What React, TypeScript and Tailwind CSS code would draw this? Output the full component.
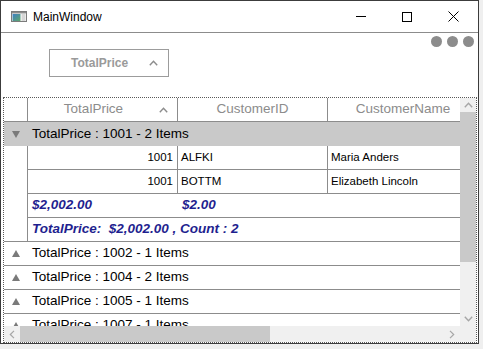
import React from 'react';

const Chevron = ({ up = true, className = '' }: { up?: boolean; className?: string }) => (
  <svg width="9" height="6" viewBox="0 0 9 6" className={className}>
    <path
      d={up ? 'M0.8 5.2 L4.5 1.3 L8.2 5.2' : 'M0.8 0.8 L4.5 4.7 L8.2 0.8'}
      fill="none"
      stroke="currentColor"
      strokeWidth="1.4"
    />
  </svg>
);

const SideChevron = ({ left = true }: { left?: boolean }) => (
  <svg width="6" height="9" viewBox="0 0 6 9" className="text-[#a6a6a6]">
    <path d={left ? 'M5 0.8 L1.3 4.5 L5 8.2' : 'M1 0.8 L4.7 4.5 L1 8.2'} fill="none" stroke="currentColor" strokeWidth="1.2" />
  </svg>
);

const Tri = ({ down = false }: { down?: boolean }) => (
  <svg width="8" height="7" viewBox="0 0 8 7">
    <polygon points={down ? '0,0 8,0 4,7' : '4,0 8,7 0,7'} fill="#7a7a7a" />
  </svg>
);

const AppIcon = () => (
  <svg width="16" height="11" viewBox="0 0 16 11">
    <defs>
      <linearGradient id="ic" x1="0" y1="0" x2="1" y2="1">
        <stop offset="0" stopColor="#3d7fc4" />
        <stop offset="1" stopColor="#5fa86a" />
      </linearGradient>
    </defs>
    <rect x="0.5" y="0.5" width="15" height="10" fill="#fff" stroke="#7b7b7b" />
    <rect x="1" y="1" width="14" height="1.5" fill="#8c8c8c" />
    <rect x="1.5" y="3" width="8" height="7" fill="url(#ic)" />
    <rect x="10.5" y="3" width="4" height="7" fill="#d6d6d6" />
  </svg>
);

const collapsed = ['1002 - 1', '1004 - 2', '1005 - 1', '1007 - 1'];

const data = [
  { price: '1001', id: 'ALFKI', name: 'Maria Anders' },
  { price: '1001', id: 'BOTTM', name: 'Elizabeth Lincoln' },
];

export default function App() {
  return (
    <div className="w-[483px] h-[349px] bg-[#efefef] font-['Liberation_Sans',Arial,sans-serif] text-black overflow-hidden">
      <div className="w-[479px] h-[344px] border border-[#3c3c3c] bg-white flex flex-col">
        {/* title bar */}
        <div className="h-[32px] shrink-0 border-b border-[#8c8c8c] flex items-center">
          <div className="ml-[10px] flex items-center">
            <AppIcon />
          </div>
          <span className="ml-[6px] text-[12px]">MainWindow</span>
          <div className="ml-auto flex items-center h-full">
            <div className="w-[46px] flex justify-center">
              <div className="w-[10px] h-px bg-black" />
            </div>
            <div className="w-[46px] flex justify-center">
              <div className="w-[10px] h-[10px] border border-black" />
            </div>
            <div className="w-[46px] flex justify-center mr-[2px]">
              <svg width="11" height="11" viewBox="0 0 11 11">
                <path d="M0.5 0.5 L10.5 10.5 M10.5 0.5 L0.5 10.5" stroke="#000" strokeWidth="1" />
              </svg>
            </div>
          </div>
        </div>

        {/* group drop area */}
        <div className="h-[64px] shrink-0 relative">
          <div className="ml-[48px] mt-[16px] w-[120px] h-[28px] border border-[#9c9c9c] flex items-center">
            <span className="pl-[21px] text-[12px] font-bold text-[#9a9a9a]">TotalPrice</span>
            <Chevron className="ml-auto mr-[10px] text-[#8c8c8c]" />
          </div>
          <div className="absolute top-[3px] right-[4px] flex gap-[5px]">
            <div className="w-[11px] h-[11px] rounded-full bg-[#8c8c8c]" />
            <div className="w-[11px] h-[11px] rounded-full bg-[#8c8c8c]" />
            <div className="w-[11px] h-[11px] rounded-full bg-[#8c8c8c]" />
          </div>
        </div>

        {/* grid */}
        <div className="ml-[2px] w-[474px] h-[246px] shrink-0 border border-dotted border-[#5a5a5a] flex flex-col">
          <div className="h-[228px] flex">
            <div className="w-[456px] shrink-0 overflow-hidden">
              {/* header */}
              <div className="h-[24px] flex border-b border-[#8c8c8c] text-[13.5px] text-[#8c8c8c]">
                <div className="w-[24px] shrink-0 border-r border-[#8c8c8c]" />
                <div className="w-[150px] shrink-0 border-r border-[#8c8c8c] flex items-center">
                  <span className="w-[131px] text-center">TotalPrice</span>
                  <Chevron className="text-[#8c8c8c]" />
                </div>
                <div className="w-[150px] shrink-0 border-r border-[#8c8c8c] flex items-center justify-center">CustomerID</div>
                <div className="w-[150px] shrink-0 flex items-center justify-center">CustomerName</div>
              </div>

              {/* expanded group */}
              <div className="h-[24px] flex items-center bg-[#c9c9c9] text-[13.5px]">
                <div className="w-[24px] shrink-0 flex justify-center">
                  <Tri down />
                </div>
                <span className="pl-[4px]">TotalPrice : 1001 - 2 Items</span>
              </div>

              {data.map((r) => (
                <div key={r.id} className="h-[24px] flex text-[11.5px]">
                  <div className="w-[24px] shrink-0 border-r border-[#8c8c8c]" />
                  <div className="w-[150px] shrink-0 border-r border-b border-[#8c8c8c] flex items-center justify-end pr-[4px]">{r.price}</div>
                  <div className="w-[150px] shrink-0 border-r border-b border-[#8c8c8c] flex items-center pl-[3px]">{r.id}</div>
                  <div className="flex-1 border-b border-[#8c8c8c] flex items-center pl-[3px]">{r.name}</div>
                </div>
              ))}

              {/* summary rows */}
              <div className="h-[24px] flex text-[13.5px] italic font-bold text-[#1f1f8f]">
                <div className="w-[24px] shrink-0 border-r border-[#8c8c8c]" />
                <div className="flex-1 flex border-b border-[#8c8c8c]">
                  <div className="w-[150px] shrink-0 flex items-center pl-[4px]">$2,002.00</div>
                  <div className="flex items-center pl-[4px]">$2.00</div>
                </div>
              </div>
              <div className="h-[24px] flex text-[13.5px] italic font-bold text-[#1f1f8f] border-b border-[#8c8c8c]">
                <div className="w-[24px] shrink-0 border-r border-[#8c8c8c]" />
                <div className="flex items-center pl-[4px] whitespace-pre">TotalPrice:  $2,002.00 , Count : 2</div>
              </div>

              {/* collapsed groups */}
              {collapsed.map((g) => (
                <div key={g} className="h-[24px] flex items-center border-b border-[#8c8c8c] text-[13.5px]">
                  <div className="w-[24px] shrink-0 flex justify-center">
                    <Tri />
                  </div>
                  <span className="pl-[4px]">TotalPrice : {g} Items</span>
                </div>
              ))}
            </div>

            {/* vertical scrollbar */}
            <div className="w-[16px] shrink-0 bg-[#f0f0f0] flex flex-col">
              <div className="h-[14px] flex items-center justify-center text-[#a6a6a6]">
                <Chevron />
              </div>
              <div className="h-[150px] bg-[#c9c9c9]" />
              <div className="flex-1" />
              <div className="h-[14px] flex items-center justify-center text-[#a6a6a6]">
                <Chevron up={false} />
              </div>
            </div>
          </div>

          {/* horizontal scrollbar */}
          <div className="h-[16px] flex bg-[#f0f0f0]">
            <div className="w-[16px] shrink-0 flex items-center justify-center">
              <SideChevron />
            </div>
            <div className="w-[250px] shrink-0 bg-[#c9c9c9]" />
            <div className="flex-1" />
            <div className="w-[16px] shrink-0 flex items-center justify-center">
              <SideChevron left={false} />
            </div>
            <div className="w-[16px] shrink-0" />
          </div>
        </div>
      </div>
    </div>
  );
}
